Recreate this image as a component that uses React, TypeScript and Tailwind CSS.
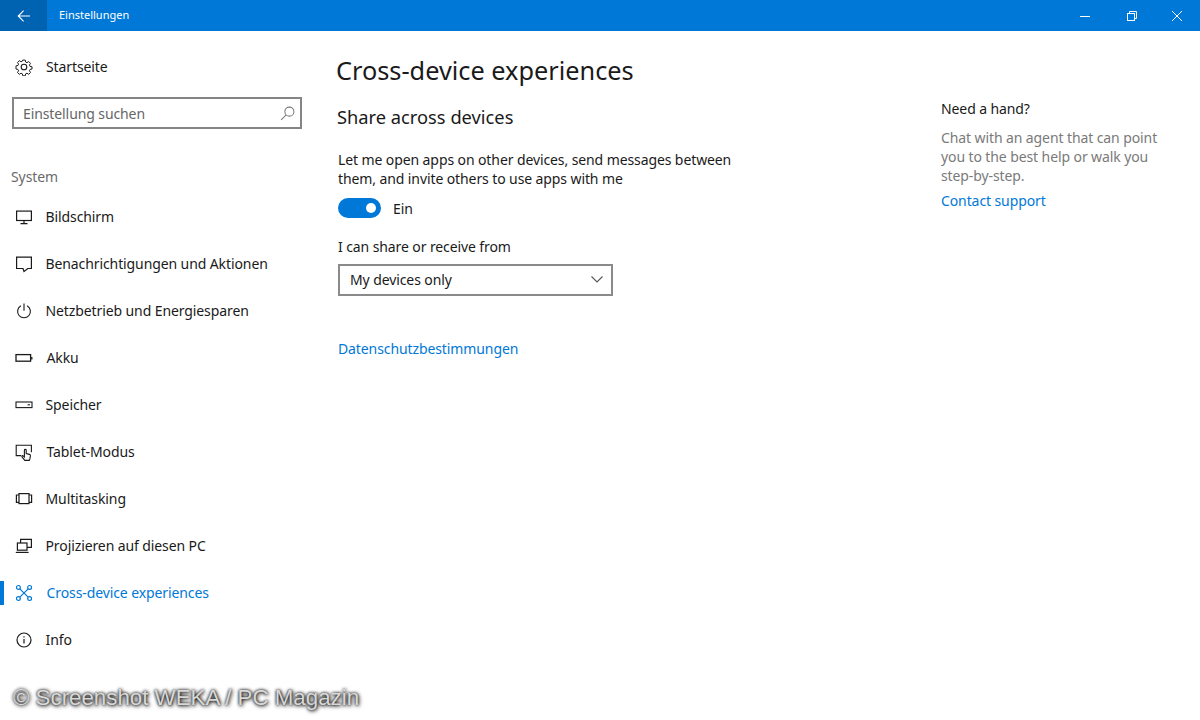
import { ReactNode } from 'react'

const ICON = 'w-[18px] h-[18px] shrink-0 fill-none stroke-current'

const icons: Record<string, ReactNode> = {
  screen: <svg viewBox="0 0 18 18" className={ICON} strokeWidth="1.2"><rect x="1.6" y="3.1" width="14.8" height="9.4" /><path d="M9 12.5v3M5.5 15.6h7" /></svg>,
  note: <svg viewBox="0 0 18 18" className={ICON} strokeWidth="1.2"><path d="M1.6 2.100h14.8v11.4h-3.6l-3.800 3-1-3H1.600z" /></svg>,
  power: <svg viewBox="0 0 18 18" className={ICON} strokeWidth="1.1"><path d="M9 1.4v7.4M5.9 3.8a6.4 6.4 0 1 0 6.2 0" /></svg>,
  battery: <svg viewBox="0 0 18 18" className={ICON} strokeWidth="1.3"><rect x="1" y="5.6" width="14.6" height="6.6" /><path d="M16.800 8v2.600" /></svg>,
  storage: <svg viewBox="0 0 18 18" className={ICON} strokeWidth="1.1"><rect x="1" y="6" width="16" height="5.6" /><path d="M12.6 8.800h2.400" /></svg>,
  tablet: <svg viewBox="0 0 18 18" className={ICON} strokeWidth="1.1"><path d="M6 12.6H1.200V2.200h15.200v7" /><path d="M9.800 17.400l-2.800-3.600c-.6-.8.500-1.600 1.200-.9l1.200 1.100V7.200c0-1.100 1.800-1.100 1.800 0v3.400l3.200.8c.8.200 1.200.700 1 1.500l-.5 3-.6 1.500z" /></svg>,
  multi: <svg viewBox="0 0 18 18" className={ICON} strokeWidth="1.2"><rect x="4" y="3.600" width="10" height="10" /><path d="M4 5H1.400v7.400H4M14 5h2.600v7.400H14" /></svg>,
  project: <svg viewBox="0 0 18 18" className={ICON} strokeWidth="1.2"><path d="M5.600 6V2.400h10.800v8H12" /><rect x="2.400" y="6" width="9.600" height="7.200" /><path d="M.8 15.400h12.800" /></svg>,
  cross: <svg viewBox="0 0 18 18" className={ICON} strokeWidth="1.2"><circle cx="3.400" cy="3.400" r="1.900" /><circle cx="14.600" cy="3.400" r="1.900" /><circle cx="3.400" cy="14.600" r="1.900" /><circle cx="14.600" cy="14.600" r="1.900" /><path d="M4.800 4.800l8.400 8.400M13.200 4.800l-8.400 8.400" /></svg>,
  info: <svg viewBox="0 0 18 18" className={ICON} strokeWidth="1.2"><circle cx="9" cy="9" r="7" /><path d="M9 8v4.600M9 5.200v1.200" /></svg>,
}

const NAV = [
  { label: 'Bildschirm', icon: 'screen' },
  { label: 'Benachrichtigungen und Aktionen', icon: 'note' },
  { label: 'Netzbetrieb und Energiesparen', icon: 'power' },
  { label: 'Akku', icon: 'battery', shift: true },
  { label: 'Speicher', icon: 'storage' },
  { label: 'Tablet-Modus', icon: 'tablet', shift: true },
  { label: 'Multitasking', icon: 'multi' },
  { label: 'Projizieren auf diesen PC', icon: 'project' },
  { label: 'Cross-device experiences', icon: 'cross', active: true, shift: true },
  { label: 'Info', icon: 'info' },
]

export default function App() {
  return (
    <div className="relative flex flex-col w-full h-screen overflow-hidden bg-white text-[#1a1a1a] text-[14px] tracking-[-0.1px] font-['Noto_Sans',sans-serif]">

      {/* Title bar */}
      <div className="flex items-center h-[31px] shrink-0 bg-[#0078d7] text-white">
        <div className="flex items-center justify-center w-[47px] h-full bg-[#0063b1]">
          <svg viewBox="0 0 14 14" className="w-[14px] h-[14px] fill-none stroke-white" strokeWidth="1.1">
            <path d="M13 7H1.200M6.600 1.600L1.200 7l5.400 5.400" />
          </svg>
        </div>
        <span className="ml-3 text-[11px] tracking-normal">Einstellungen</span>
        <div className="flex items-center ml-auto h-full">
          <div className="flex items-center justify-center w-[46px]">
            <svg viewBox="0 0 10 10" className="w-[10px] h-[10px] stroke-white" strokeWidth="1"><path d="M0 5.500h10" /></svg>
          </div>
          <div className="flex items-center justify-center w-[46px] pl-[2px]">
            <svg viewBox="0 0 10 10" className="w-[10px] h-[10px] fill-none stroke-white" strokeWidth="1"><rect x="0.5" y="2.500" width="7" height="7" /><path d="M2.500 2.500V.5h7v7h-2" /></svg>
          </div>
          <div className="flex items-center justify-center w-[46px]">
            <svg viewBox="0 0 10 10" className="w-[10px] h-[10px] stroke-white" strokeWidth="1"><path d="M0 0l10 10M10 0L0 10" /></svg>
          </div>
        </div>
      </div>

      <div className="flex flex-1 min-h-0">

        {/* Sidebar */}
        <aside className="w-[337px] shrink-0">
          <div className="flex items-center h-[47px] mt-[12px] pl-[15px] gap-[13px]">
            <svg viewBox="0 0 18 18" className={ICON} strokeWidth="1.1">
              <circle cx="9" cy="9" r="2.800" />
              <path d="M7.600 1.200h2.800l.4 2.200 1.500.7 2-1.200 2 2-1.200 1.900.7 1.500 2.200.4v2.600l-2.200.4-.7 1.500 1.200 2-2 2-2-1.200-1.500.7-.4 2.200H7.600l-.4-2.200-1.500-.7-2 1.200-2-2 1.200-2-.7-1.500-2.200-.4V7.700l2.200-.4.7-1.500-1.200-1.900 2-2 2 1.200 1.500-.7z" transform="translate(1 1) scale(.89)" />
            </svg>
            <span>Startseite</span>
          </div>

          <div className="flex items-center justify-between w-[290px] h-[32px] ml-3 mt-[7px] pl-[9px] pr-[5px] border-2 border-[#858585] text-[#666666]">
            <span>Einstellung suchen</span>
            <svg viewBox="0 0 16 16" className="w-[15px] h-[15px] fill-none stroke-[#7a7a7a]" strokeWidth="1.1">
              <circle cx="10" cy="6" r="4.800" /><path d="M6.600 9.400L1.200 14.800" />
            </svg>
          </div>

          <p className="mt-[38px] ml-[11px] text-[#6b6b6b] leading-[20px]">System</p>

          <nav className="mt-[6px]">
            {NAV.map(n => (
              <div key={n.label}
                className={`flex items-center h-[47px] pl-[15px] gap-[12.500px] ${n.active ? 'text-[#0078d7]' : ''}`}>
                {n.active && <span className="absolute left-0 w-1 h-[24px] bg-[#0078d7]" />}
                {icons[n.icon]}
                <span className={n.shift ? 'ml-px' : ''}>{n.label}</span>
              </div>
            ))}
          </nav>
        </aside>

        {/* Main */}
        <main className="w-[604px] shrink-0">
          <h1 className="mt-[20px] -ml-px text-[25.300px] leading-[38px] tracking-normal">Cross-device experiences</h1>
          <h2 className="mt-[15px] text-[18.300px] leading-[26px] tracking-normal">Share across devices</h2>
          <p className="mt-[20px] ml-px w-[420px] leading-[19px]">
            Let me open apps on other devices, send messages between them, and invite others to use apps with me
          </p>
          <div className="flex items-center gap-3 mt-[10px] ml-px h-[20px]">
            <div className="flex items-center justify-end w-[43px] h-[20px] pr-[5px] rounded-full bg-[#0078d7]">
              <span className="w-[10px] h-[10px] rounded-full bg-white" />
            </div>
            <span>Ein</span>
          </div>
          <p className="mt-[19px] ml-px leading-[20px]">I can share or receive from</p>
          <div className="flex items-center justify-between w-[275px] h-[32px] ml-px mt-[7px] pl-[10px] pr-[8px] pb-[2px] border-2 border-[#8a8a8a]">
            <span>My devices only</span>
            <svg viewBox="0 0 12 7" className="w-[12px] h-[7px] fill-none stroke-[#555555]" strokeWidth="1.1"><path d="M.5.5L6 6 11.500.5" /></svg>
          </div>
          <p className="mt-[43px] ml-px leading-[20px] text-[#0078d7]">Datenschutzbestimmungen</p>
        </main>

        {/* Help */}
        <section className="flex-1 pt-[68px]">
          <p className="leading-[20px]">Need a hand?</p>
          <p className="mt-[9px] w-[235px] leading-[19px] text-[#7a7a7a]">
            Chat with an agent that can point you to the best help or walk you step-by-step.
          </p>
          <p className="mt-[6px] leading-[20px] text-[#0078d7]">Contact support</p>
        </section>
      </div>

      {/* Watermark */}
      <span className="absolute left-[13px] top-[685px] text-[22.300px] tracking-normal leading-[26px] text-[#d8d8d8] font-['Liberation_Sans',sans-serif] [text-shadow:0_0_3px_#000,1px_1px_4px_#000]">
        © Screenshot WEKA / PC Magazin
      </span>
    </div>
  )
}
